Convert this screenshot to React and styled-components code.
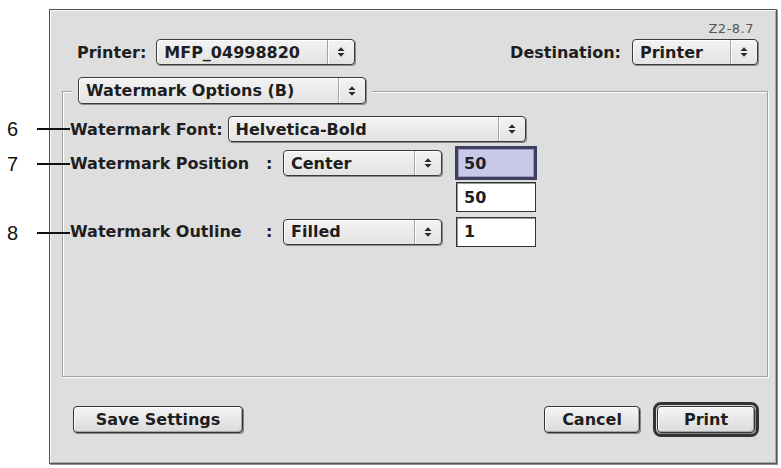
import React from 'react';
import styled, { createGlobalStyle } from 'styled-components';

const GlobalStyle = createGlobalStyle`
  html, body {
    margin: 0;
    padding: 0;
    background: #ffffff;
  }
  body {
    font-family: "DejaVu Sans", "Liberation Sans", sans-serif;
    color: #1e1e1e;
  }
`;

const Page = styled.div`
  position: relative;
  width: 781px;
  height: 468px;
  box-sizing: border-box;
  padding: 9px 4px 4px 49px;
  overflow: hidden;
`;

const Window = styled.div`
  width: 728px;
  height: 455px;
  box-sizing: border-box;
  display: flex;
  flex-direction: column;
  padding-top: 13px;
  background: #dedede;
  border: 1px solid #555555;
  box-shadow: inset 1px 1px 0 #f6f6f6, inset -1px -1px 0 #ababab, 1px 1px 0 #8f8f8f;
`;

const Version = styled.div`
  align-self: flex-end;
  margin-right: 22px;
  font-size: 13px;
  line-height: 12px;
  letter-spacing: 0.5px;
  color: #555555;
`;

const TopRow = styled.div`
  display: flex;
  align-items: center;
  justify-content: space-between;
  margin-top: 4px;
  padding: 0 18px 0 27px;
`;

const Field = styled.div`
  display: flex;
  align-items: center;
  gap: ${({ $gap }) => $gap || 10}px;
`;

const Label = styled.span`
  display: inline-block;
  width: ${({ $width }) => ($width ? `${$width}px` : 'auto')};
  font-size: 16px;
  font-weight: bold;
  white-space: nowrap;
`;

const Popup = styled.div`
  width: ${({ $width }) => $width}px;
  height: ${({ $height }) => $height || 26}px;
  box-sizing: border-box;
  display: flex;
  align-items: center;
  border: 1px solid #3a3a3a;
  border-radius: 4px;
  background: linear-gradient(#f3f3f3, #e3e3e3);
  box-shadow: inset 1px 1px 0 #ffffff, 1px 1px 0 #8a8a8a;
  font-size: 16px;
  font-weight: bold;
`;

const PopupText = styled.span`
  flex: 1;
  padding-left: 7px;
  white-space: nowrap;
  overflow: hidden;
`;

const PopupArrow = styled.span`
  width: 26px;
  align-self: stretch;
  display: flex;
  align-items: center;
  justify-content: center;
  border-left: 1px solid #a4a4a4;
  box-shadow: inset 1px 0 0 #ffffff;
`;

const GroupBox = styled.div`
  height: 286px;
  box-sizing: border-box;
  margin: 26px 8px 0 12px;
  padding-left: 7px;
  border: 1px solid #a2a2a2;
  box-shadow: inset 1px 1px 0 #ffffff, 1px 1px 0 #ffffff;
`;

const Legend = styled.div`
  width: fit-content;
  margin: -15px 0 0 2px;
  padding: 0 6px;
  background: #dedede;
`;

const FontRow = styled.div`
  display: flex;
  align-items: center;
  gap: 5px;
  margin-top: 12px;
`;

const OptionGrid = styled.div`
  display: grid;
  grid-template-columns: 196px 17px 159px 95px;
  grid-template-rows: 34px 34px 35px;
  align-items: center;
  margin-top: 4px;
`;

const Colon = styled.span`
  font-size: 16px;
  font-weight: bold;
`;

const TextField = styled.div`
  grid-column: 4;
  justify-self: end;
  width: ${({ $focused }) => ($focused ? 82 : 80)}px;
  height: ${({ $focused }) => ($focused ? 34 : 30)}px;
  margin-right: ${({ $focused }) => ($focused ? 0 : 1)}px;
  box-sizing: border-box;
  display: flex;
  align-items: center;
  padding-left: ${({ $focused }) => ($focused ? 6 : 7)}px;
  font-size: 16px;
  font-weight: bold;
  background: ${({ $focused }) => ($focused ? '#c8c8e8' : '#ffffff')};
  border: ${({ $focused }) => ($focused ? '3px solid #3e3e5e' : '1px solid #333333')};
  box-shadow: ${({ $focused }) =>
    $focused ? 'inset 0 0 0 1px #9a9abc' : 'inset 1px 1px 0 #9a9a9a'};
`;

const ButtonRow = styled.div`
  display: flex;
  align-items: center;
  justify-content: space-between;
  margin-top: 25px;
  padding: 0 17px 0 23px;
`;

const ButtonGroup = styled.div`
  display: flex;
  align-items: center;
  gap: 13px;
`;

const Button = styled.button`
  width: ${({ $width }) => $width}px;
  height: 27px;
  box-sizing: border-box;
  padding: 0;
  border: 1px solid #333333;
  border-radius: 4px;
  background: linear-gradient(#f5f5f5, #dadada);
  box-shadow: inset 1px 1px 0 #ffffff, inset -1px -1px 0 #a6a6a6, 1px 1px 0 #858585;
  font-family: inherit;
  font-size: 16px;
  font-weight: bold;
  color: #1e1e1e;
`;

const DefaultRing = styled.div`
  display: flex;
  padding: 1px;
  border: 3px solid #333333;
  border-radius: 8px;
`;

const Callout = styled.div`
  position: absolute;
  left: 7px;
  top: ${({ $y }) => $y - 12}px;
  height: 24px;
  display: flex;
  align-items: center;
  font-family: "Liberation Sans", Arial, sans-serif;
  font-size: 20px;
  color: #111111;
`;

const CalloutLine = styled.span`
  width: 33px;
  height: 2px;
  margin-left: 19px;
  background: #111111;
`;

function Arrows() {
  return (
    <svg width="8" height="12" viewBox="0 0 8 12">
      <path d="M0.5 5 L4 1.2 L7.5 5 Z M0.5 7 L4 10.8 L7.5 7 Z" fill="#2a2a2a" />
    </svg>
  );
}

function Select({ value, width, height }) {
  return (
    <Popup $width={width} $height={height}>
      <PopupText>{value}</PopupText>
      <PopupArrow>
        <Arrows />
      </PopupArrow>
    </Popup>
  );
}

export default function App() {
  return (
    <>
      <GlobalStyle />
      <Page>
        <Window>
          <Version>Z2-8.7</Version>
          <TopRow>
            <Field $gap={10}>
              <Label>Printer:</Label>
              <Select value="MFP_04998820" width={199} />
            </Field>
            <Field $gap={11}>
              <Label>Destination:</Label>
              <Select value="Printer" width={126} />
            </Field>
          </TopRow>

          <GroupBox>
            <Legend>
              <Select value="Watermark Options (B)" width={288} height={27} />
            </Legend>

            <FontRow>
              <Label>Watermark Font:</Label>
              <Select value="Helvetica-Bold" width={298} />
            </FontRow>

            <OptionGrid>
              <Label>Watermark Position</Label>
              <Colon>:</Colon>
              <Select value="Center" width={159} />
              <TextField $focused>50</TextField>

              <TextField style={{ gridRow: 2 }}>50</TextField>

              <Label style={{ gridRow: 3 }}>Watermark Outline</Label>
              <Colon style={{ gridRow: 3 }}>:</Colon>
              <div style={{ gridRow: 3 }}>
                <Select value="Filled" width={159} />
              </div>
              <TextField style={{ gridRow: 3 }}>1</TextField>
            </OptionGrid>
          </GroupBox>

          <ButtonRow>
            <Button $width={170}>Save Settings</Button>
            <ButtonGroup>
              <Button $width={96}>Cancel</Button>
              <DefaultRing>
                <Button $width={98}>Print</Button>
              </DefaultRing>
            </ButtonGroup>
          </ButtonRow>
        </Window>

        <Callout $y={129}>
          6<CalloutLine />
        </Callout>
        <Callout $y={164}>
          7<CalloutLine />
        </Callout>
        <Callout $y={233}>
          8<CalloutLine />
        </Callout>
      </Page>
    </>
  );
}
